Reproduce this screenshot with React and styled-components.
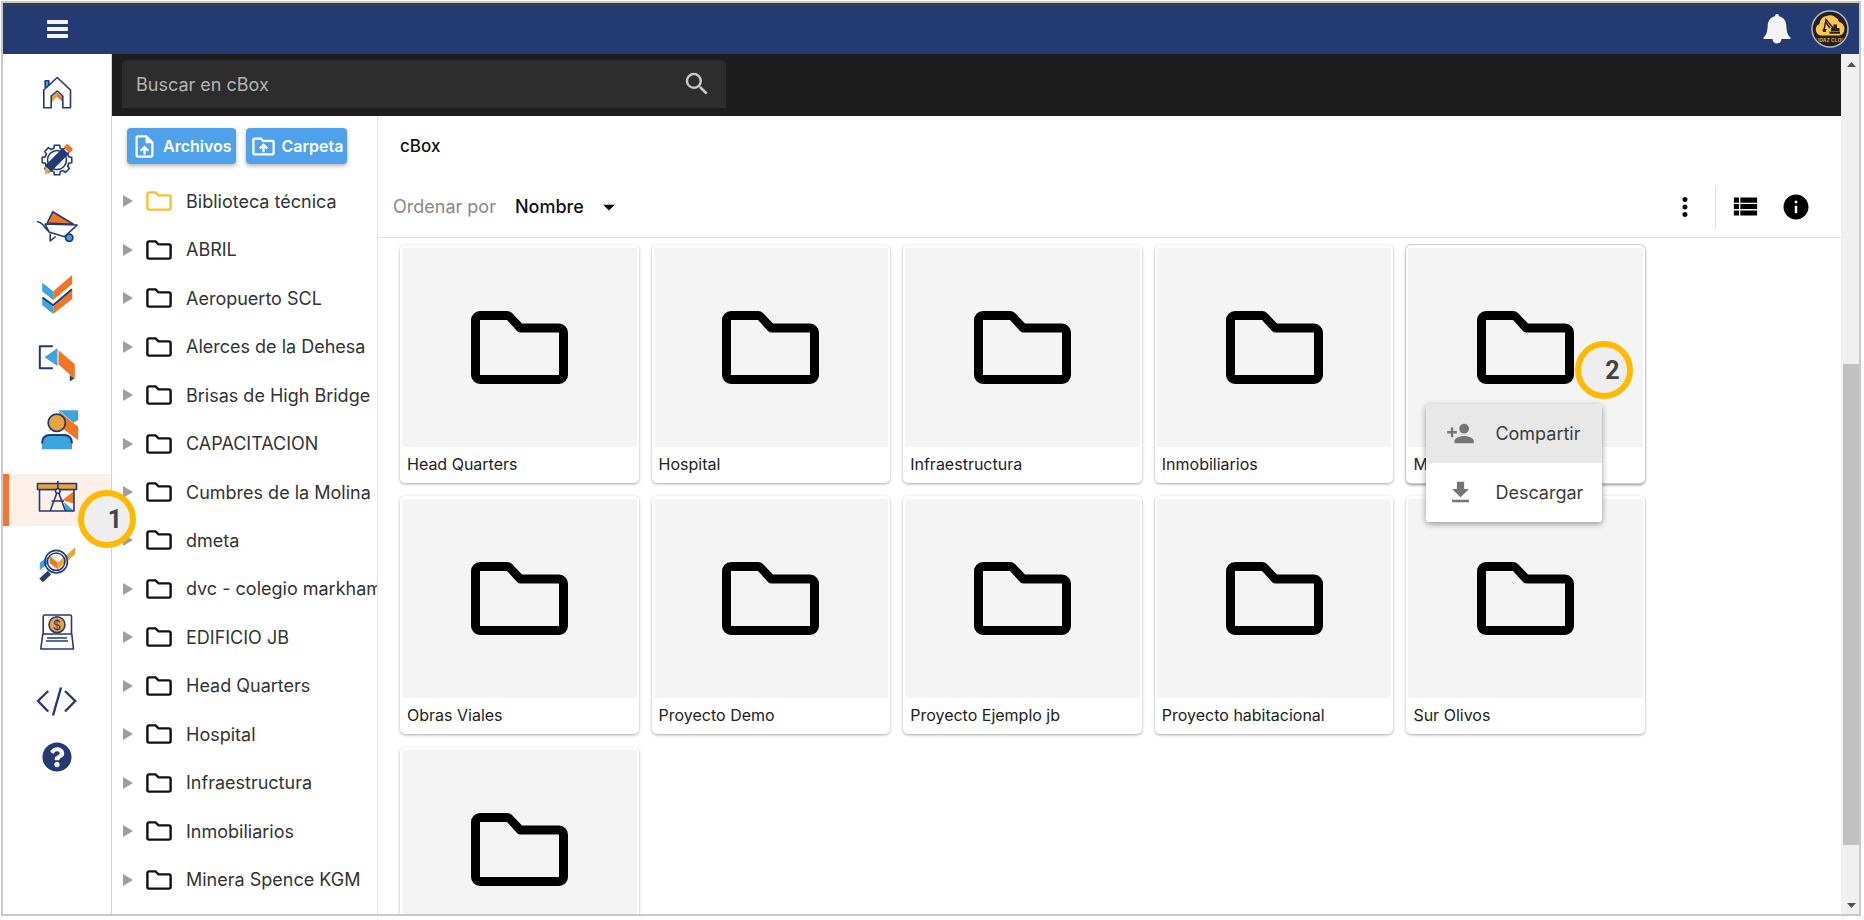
import React from 'react'
import styled, { createGlobalStyle, css } from 'styled-components'
import {
  MdSearch,
  MdArrowDropDown,
  MdMoreVert,
  MdViewList,
  MdInfo,
  MdPersonAdd,
  MdFileDownload,
  MdOutlineUploadFile,
  MdOutlineDriveFolderUpload,
} from 'react-icons/md'
import { FaQuestionCircle } from 'react-icons/fa'

const NAVY = '#243a73'
const ORANGE = '#f07626'
const SKY = '#3ba5de'
const AMBER = '#e9a43c'

const GlobalStyle = createGlobalStyle`
* {
  box-sizing: border-box;
}
body {
  margin: 0;
  background: #fff;
  font-family: Inter, "Open Sans", sans-serif;
  color: #2b2b2b;
}
button, input, select {
  font-family: inherit;
}
`

const Frame = styled.div`
height: calc(100vh - 5px);
margin: 1px 3px 4px 1px;
border: 2px solid #c9c9c9;
display: flex;
flex-direction: column;
overflow: hidden;
`

const Header = styled.header`
flex: none;
height: 51px;
padding: 0 10px 2px 44px;
border-top: 3px solid #3f3f42;
background: ${NAVY};
display: flex;
align-items: center;
justify-content: space-between;
`

const HeaderRight = styled.div`
display: flex;
align-items: center;
gap: 20px;
`

const PlainButton = styled.button`
padding: 0;
border: none;
background: none;
color: inherit;
display: flex;
align-items: center;
justify-content: center;
cursor: pointer;
`

const Body = styled.div`
flex: 1;
min-height: 0;
display: flex;
`

const Sidebar = styled.nav`
flex: none;
width: 109px;
padding-top: 12px;
border-right: 1px solid #d4d4d4;
display: flex;
flex-direction: column;
gap: 16px;
`

const NavItem = styled.div`
position: relative;
`

const NavLink = styled.a`
height: ${(props) => (props.$small ? '42px' : '52px')};
color: ${NAVY};
display: flex;
align-items: center;
justify-content: center;
${(props) =>
  props.$active &&
  css`
    background: #fef0e9;
    box-shadow: inset 6px 0 0 #f9752b;
  `}
`

const Badge = styled.span`
position: absolute;
z-index: 3;
left: ${(props) => props.$left};
top: ${(props) => props.$top};
width: 58px;
height: 58px;
padding-left: 16px;
border: 6px solid #ffb900;
border-radius: 50%;
background: #eee;
color: #444;
font: 700 25px/48px Roboto, sans-serif;
text-align: center;
`

const Content = styled.div`
flex: 1;
min-width: 0;
display: flex;
flex-direction: column;
`

const SearchBar = styled.div`
flex: none;
height: 62px;
padding: 6px 10px 8px;
background: #1d1d1d;
`

const SearchBox = styled.form`
width: 36%;
min-width: 300px;
max-width: 604px;
height: 48px;
padding: 0 14px;
border-radius: 5px 5px 0 0;
background: #2d2d2d;
color: #c8c8c8;
display: flex;
align-items: center;
`

const SearchInput = styled.input`
flex: 1;
min-width: 0;
padding: 0;
border: none;
outline: none;
background: none;
color: #fff;
font-size: 18px;

&::placeholder {
  color: #b4b4b4;
  opacity: 1;
}
`

const Panels = styled.div`
flex: 1;
min-height: 0;
display: flex;
`

const TreePanel = styled.aside`
flex: none;
width: 266px;
padding: 12px 0 10px;
border-right: 1px solid #e0e0e0;
display: flex;
flex-direction: column;
overflow: hidden;
`

const UploadButtons = styled.div`
padding-left: 15px;
margin-bottom: 13px;
display: flex;
gap: 10px;
`

const UploadButton = styled.button`
height: 36px;
padding: 0 4px;
border: none;
border-radius: 4px;
background: #4fa1eb;
color: #fff;
font-size: 16px;
font-weight: 600;
display: flex;
align-items: center;
gap: 5px;
box-shadow: 0 2px 4px rgba(0, 0, 0, 0.3);
cursor: pointer;
`

const Tree = styled.ul`
flex: 1;
min-height: 0;
margin: 0;
padding: 0;
list-style: none;
display: grid;
grid-auto-rows: 1fr;
`

const TreeRow = styled.li`
padding-left: 11px;
display: flex;
align-items: center;
`

const Toggle = styled(PlainButton)`
width: 10px;
height: 12px;
margin-right: 13px;
`

const TreeLink = styled.a`
color: #333;
font-size: 18px;
text-decoration: none;
white-space: nowrap;
display: flex;
align-items: center;
gap: 14px;
`

const Browser = styled.main`
flex: 1;
min-width: 0;
display: flex;
flex-direction: column;
`

const Title = styled.h1`
flex: none;
margin: 0;
padding: 0 22px;
color: #111;
font-size: 17px;
font-weight: 500;
line-height: 60px;
`

const Toolbar = styled.div`
flex: none;
height: 62px;
padding: 0 30px 0 15px;
border-bottom: 1px solid #e2e2e2;
display: flex;
align-items: center;
`

const SortLabel = styled.label`
margin-right: 19px;
color: #888;
font-size: 18px;
`

const SortField = styled.div`
display: grid;
align-items: center;

svg {
  grid-area: 1 / 1;
  justify-self: end;
  color: #000;
  pointer-events: none;
}
`

const SortSelect = styled.select`
grid-area: 1 / 1;
appearance: none;
width: 108px;
padding: 0;
border: none;
background: none;
color: #111;
font-size: 18px;
font-weight: 500;
`

const Tools = styled.div`
height: 42px;
margin-left: auto;
color: #000;
display: flex;
align-items: center;
`

const ToolGroup = styled.div`
height: 100%;
margin-left: 15px;
padding-left: 14px;
border-left: 1px solid #dedede;
display: flex;
align-items: center;
gap: 20px;
`

const CardGrid = styled.ul`
flex: 1;
min-height: 0;
margin: 0;
padding: 7px 22px 0;
list-style: none;
display: grid;
grid-template-columns: repeat(auto-fill, minmax(230px, 1fr));
grid-auto-rows: 238px;
gap: 13px;
max-width: 1289px;
overflow: hidden;
`

const Card = styled.li`
position: relative;
padding: 3px 2px 0;
border-radius: 5px;
background: #fff;
display: flex;
flex-direction: column;
box-shadow: ${(props) =>
    props.$selected
      ? '0 0 0 1px #ccc, 0 2px 3px rgba(0, 0, 0, 0.45)'
      : '0 1px 3px rgba(0, 0, 0, 0.34)'};
`

const Thumb = styled.div`
flex: 1;
background: #f4f4f4;
display: flex;
align-items: center;
justify-content: center;
`

const CardName = styled.a`
flex: none;
height: 36px;
padding: 0 5px;
color: #222;
font-size: 16px;
line-height: 34px;
text-decoration: none;
white-space: nowrap;
`

const Menu = styled.div`
position: absolute;
z-index: 2;
left: 20px;
top: 159px;
width: 176px;
border-radius: 4px;
background: #fff;
box-shadow: 0 2px 6px rgba(0, 0, 0, 0.4);
overflow: hidden;
`

const MenuItem = styled.button`
width: 100%;
height: 59px;
padding: 0 0 0 20px;
border: none;
background: ${(props) => (props.$hover ? '#e8e8e8' : '#fff')};
color: #3c3c3c;
font-size: 18px;
display: flex;
align-items: center;
gap: 20px;
cursor: pointer;

svg {
  color: #757575;
}
`

const Scrollbar = styled.div`
flex: none;
width: 18px;
padding: 8px 0 6px 2px;
background: #f0f0f0;
display: flex;
flex-direction: column;
align-items: center;
justify-content: space-between;
`

const ScrollTrack = styled.div`
flex: 1;
width: 100%;
margin: 4px 0;
display: flex;
flex-direction: column;

&::before {
  content: '';
  flex: 294;
}
&::after {
  content: '';
  flex: 54;
}
`

const ScrollThumb = styled.div`
flex: 482;
background: #c1c1c1;
`

const folderPath =
  'M9 0H36Q39 0 41 2L51 12.5H88A9 9 0 0 1 97 21.5V64A9 9 0 0 1 88 73H9A9 9 0 0 1 0 64V9A9 9 0 0 1 9 0ZM9 9V64H88V21.5H50Q47.500 21.500 46 20L36 9Z'

const BigFolder = () => (
  <svg width="97" height="73" viewBox="0 0 97 73" aria-hidden="true">
    <path d={folderPath} fillRule="evenodd" />
  </svg>
)

const SmallFolder = ({ color = '#111' }) => (
  <svg width="26" height="20" viewBox="0 0 26 20" fill="none" stroke={color} strokeWidth="2.400" aria-hidden="true">
    <path d="M3 1.400H9.500L12.500 4.400H23a1.600 1.600 0 0 1 1.600 1.600V17a1.600 1.600 0 0 1-1.600 1.600H3A1.600 1.600 0 0 1 1.400 17V3A1.600 1.600 0 0 1 3 1.400Z" />
  </svg>
)

const Glyph = ({ height = 52, children }) => (
  <svg
    width="52"
    height={height}
    viewBox={`0 0 52 ${height}`}
    fill="none"
    stroke={NAVY}
    strokeWidth="1.600"
    strokeLinejoin="round"
    aria-hidden="true"
  >
    {children}
  </svg>
)

const gearPoints = () => {
  const points = []
  for (let i = 0; i < 8; i++) {
    const mid = (i * Math.PI) / 4
    const steps = [[-0.26, 12.2], [-0.18, 15], [0.18, 15], [0.26, 12.2]]
    steps.forEach(([offset, r]) => {
      points.push(`${26 + r * Math.sin(mid + offset)},${26 - r * Math.cos(mid + offset)}`)
    })
  }
  return points.join(' ')
}

const HomeGlyph = () => (
  <Glyph>
    <path d="M14.200 22V14.700h3.600v5" fill={SKY} />
    <path d="M26 26.500 31.500 31v5L26 30.500 20.500 36v-5Z" fill={ORANGE} stroke="none" />
    <path d="M26 26.500V30.500L20.500 36v-5Z" fill={AMBER} stroke="none" />
    <path d="M26.200 11.500 39.500 24v17.700h-7.700V30l-5.600-5-6 5v11.700h-7.400V24Z" />
  </Glyph>
)

const GearGlyph = () => (
  <Glyph>
    <polygon points={gearPoints()} />
    <circle cx="26" cy="26" r="9.500" />
    <g transform="rotate(-45 26 26)" stroke="none">
      <rect x="13.500" y="21.500" width="25" height="8.500" fill={NAVY} />
      <path d="M7.500 27.500 13 22v8Z" fill={AMBER} />
      <rect x="39.500" y="21.500" width="5.500" height="8.500" rx="1.500" fill={ORANGE} />
    </g>
  </Glyph>
)

const BarrowGlyph = () => (
  <Glyph>
    <path d="M21.800 9.700 42.500 22.300 16.200 21Z" fill={ORANGE} />
    <path d="M6.200 19.500q4 1 6 3.500 2.500 4 6 6.800M14.200 22l32 1-12.700 11.700L18 30Z" />
    <path d="M19.200 31.500v7.500l5.500-4.500" />
    <circle cx="38.200" cy="35.700" r="3.600" fill={SKY} strokeWidth="1.800" />
  </Glyph>
)

const ChecksGlyph = () => (
  <Glyph>
    <g stroke="none">
      <path d="M11.200 12.700l11 8.600V30l-11-8.700ZM11.200 27l11 9.700V44l-11-9Z" fill={SKY} />
      <path d="M41.200 5v9l-19 16v-8.700ZM41.200 20v9l-19 15v-7.300Z" fill={ORANGE} />
    </g>
    <path d="M11.500 26.300l10.700 7.800 18.800-16" stroke="#fff" />
    <path d="M11.500 27.500l10.700 7.800 18.800-16" strokeWidth="2" />
  </Glyph>
)

const TransferGlyph = () => (
  <Glyph>
    <path d="M21.800 8.300h-13v22h13" strokeWidth="2" />
    <path d="M13.500 19.300 26.500 10v18Z" fill={SKY} stroke="none" />
    <path d="M27.500 12.300l16.300 14V41l-16.300-14.500Z" fill={ORANGE} stroke="none" />
    <path d="M38.800 37l4.400 3.500-4.400 3Z" fill={NAVY} stroke="none" />
  </Glyph>
)

const PersonGlyph = () => (
  <Glyph>
    <path d="M27.500 4.300h19.700V14l-4.700 2.700Z" fill={SKY} stroke="none" />
    <path d="M27.500 5l19.700 15.700v13.600L31 22Z" fill={ORANGE} stroke="none" />
    <path d="M11 43.300V37q0-8 8-8h14q8 0 8 8v6.300Z" fill={SKY} stroke="none" />
    <path d="M11 37.500Q11 29 19 29h14q8 0 8 8.500" strokeWidth="2" />
    <circle cx="25.800" cy="16.700" r="8.600" fill={AMBER} strokeWidth="1.800" />
  </Glyph>
)

const DraftGlyph = () => (
  <Glyph>
    <path d="M43 17v12.500L31.500 26Z" fill={ORANGE} stroke="none" />
    <path d="M33 28l10 9h-8Z" fill={SKY} stroke="none" />
    <rect x="8.500" y="15.500" width="34.500" height="21.500" />
    <rect x="6.500" y="9.500" width="39" height="6" fill={AMBER} />
    <path d="M26.800 7v8M26 18.500 19.200 37M27.600 18.500 34.500 37M20.500 27H33" />
    <circle cx="26.800" cy="17" r="2.300" fill="#fff" />
  </Glyph>
)

const AnalysisGlyph = () => (
  <Glyph>
    <g stroke="none">
      <path d="M8.800 20.700l8-6v7l-8 6.300Z" fill={SKY} />
      <path d="M18.500 13.500l8.300 7.200v6.600L18.500 21Z" fill={ORANGE} />
      <path d="M26.800 20.700 44.200 5.300V12L26.800 27.300Z" fill={AMBER} />
    </g>
    <circle cx="25.200" cy="19.700" r="11.300" />
    <circle cx="25.200" cy="19.700" r="8.700" />
    <path d="M18.500 30.700 10 38.300" strokeWidth="5" />
  </Glyph>
)

const FinanceGlyph = () => (
  <Glyph>
    <path d="M12.200 24V6.500q0-1.500 1.500-1.500h25.300q1.500 0 1.500 1.500V24M11.800 24h29l1.700 15H9.800Z" />
    <path d="M16 28h20M15 31h22" />
    <circle cx="26" cy="14.700" r="8" fill={AMBER} />
    <text x="26" y="19.500" textAnchor="middle" fontSize="13" fill={NAVY} stroke="none">$</text>
  </Glyph>
)

const CodeGlyph = () => (
  <Glyph height={42}>
    <path d="M17.200 13 7 23l10.200 10.500M34 13l10.200 10L34 33.500M30 9.500 22 37.500" strokeWidth="2.400" strokeLinejoin="miter" />
  </Glyph>
)

const Bell = () => (
  <svg width="28" height="30" viewBox="0 0 28 30" fill="#f4f4f4" aria-hidden="true">
    <path d="M14 0q2 0 2 2.200c4.500 1 7 4.400 7.300 9 .3 6 .9 9.300 4.200 12.300q.6 1.500-1 1.500H1.500q-1.600 0-1-1.500c3.300-3 3.900-6.300 4.200-12.300.3-4.600 2.800-8 7.300-9Q12 0 14 0Z" />
    <path d="M9.500 25h9a4.500 4.500 0 0 1-9 0Z" />
  </svg>
)

const Avatar = () => (
  <svg width="38" height="38" viewBox="0 0 38 38" aria-hidden="true">
    <clipPath id="avatar-disc">
      <circle cx="19" cy="19" r="17" />
    </clipPath>
    <circle cx="19" cy="19" r="18" fill="#231f20" stroke="#b9b9b9" strokeWidth="1.500" />
    <path d="M10 25.500a6 6 0 0 1-1.500-11.500A8 8 0 0 1 15.500 6a9.500 9.500 0 0 1 12.500 6A7 7 0 0 1 28.500 25.500Z" fill="#fdc651" />
    <g fill="none" stroke="#231f20" strokeWidth="1.400">
      <path d="M13 20l2-10.500 8 9.500" />
      <path d="M14.500 12l4.500 6" />
    </g>
    <path d="M11.500 19l4 0-1 3h-2.500ZM20 18h2.500v-3.500h3.500V18h2.500v3h-8.500ZM18.500 21.500h10.500v2.300h-10.500Z" fill="#231f20" />
    <text x="19" y="31.500" textAnchor="middle" fontSize="5" fontWeight="700" fill="#d9a53f" clipPath="url(#avatar-disc)">OLIDAZ CLOUD</text>
  </svg>
)

const navItems = [
  { name: 'Inicio', icon: <HomeGlyph /> },
  { name: 'Configuración', icon: <GearGlyph /> },
  { name: 'Obra', icon: <BarrowGlyph /> },
  { name: 'Calidad', icon: <ChecksGlyph /> },
  { name: 'Transferencias', icon: <TransferGlyph /> },
  { name: 'Usuarios', icon: <PersonGlyph /> },
  { name: 'Planos', icon: <DraftGlyph />, active: true },
  { name: 'Análisis', icon: <AnalysisGlyph /> },
  { name: 'Finanzas', icon: <FinanceGlyph /> },
  { name: 'Desarrollo', icon: <CodeGlyph />, small: true },
  { name: 'Ayuda', icon: <FaQuestionCircle size={30} />, small: true },
]

const treeItems = [
  'Biblioteca técnica',
  'ABRIL',
  'Aeropuerto SCL',
  'Alerces de la Dehesa',
  'Brisas de High Bridge',
  'CAPACITACION',
  'Cumbres de la Molina',
  'dmeta',
  'dvc - colegio markham',
  'EDIFICIO JB',
  'Head Quarters',
  'Hospital',
  'Infraestructura',
  'Inmobiliarios',
  'Minera Spence KGM',
]

const cards = [
  'Head Quarters',
  'Hospital',
  'Infraestructura',
  'Inmobiliarios',
  'Minera Spence KGM',
  'Obras Viales',
  'Proyecto Demo',
  'Proyecto Ejemplo jb',
  'Proyecto habitacional',
  'Sur Olivos',
  '',
]

const App = () => {
  return (
    <>
    <GlobalStyle/>
    <Frame>
        <Header>
            <PlainButton aria-label="Menú">
                <svg width="21" height="18" viewBox="0 0 21 18" fill="#f4f4f4">
                    <rect width="21" height="4" rx="1"/>
                    <rect y="7" width="21" height="4" rx="1"/>
                    <rect y="14" width="21" height="4" rx="1"/>
                </svg>
            </PlainButton>
            <HeaderRight>
                <PlainButton aria-label="Notificaciones"><Bell/></PlainButton>
                <PlainButton aria-label="Cuenta"><Avatar/></PlainButton>
            </HeaderRight>
        </Header>
        <Body>
            <Sidebar>
                {navItems.map((item) => (
                  <NavItem key={item.name}>
                      <NavLink href="#" aria-label={item.name} $active={item.active} $small={item.small}>
                          {item.icon}
                      </NavLink>
                      {item.active && <Badge $left="75px" $top="16px">1</Badge>}
                  </NavItem>
                ))}
            </Sidebar>
            <Content>
                <SearchBar>
                    <SearchBox>
                        <SearchInput type="text" aria-label="Buscar en cBox" placeholder="Buscar en cBox"/>
                        <PlainButton type="button" aria-label="Buscar"><MdSearch size={30}/></PlainButton>
                    </SearchBox>
                </SearchBar>
                <Panels>
                    <TreePanel>
                        <UploadButtons>
                            <UploadButton><MdOutlineUploadFile size={27}/>Archivos</UploadButton>
                            <UploadButton><MdOutlineDriveFolderUpload size={27}/>Carpeta</UploadButton>
                        </UploadButtons>
                        <Tree>
                            {treeItems.map((name, index) => (
                              <TreeRow key={name}>
                                  <Toggle aria-label={`Expandir ${name}`}>
                                      <svg width="10" height="12" viewBox="0 0 10 12"><path d="M0 0 10 6 0 12Z" fill="#9e9e9e"/></svg>
                                  </Toggle>
                                  <TreeLink href="#">
                                      <SmallFolder color={index === 0 ? '#fcc02e' : '#111'}/>
                                      {name}
                                  </TreeLink>
                              </TreeRow>
                            ))}
                        </Tree>
                    </TreePanel>
                    <Browser>
                        <Title>cBox</Title>
                        <Toolbar>
                            <SortLabel htmlFor="sort">Ordenar por</SortLabel>
                            <SortField>
                                <SortSelect id="sort" defaultValue="Nombre">
                                    <option>Nombre</option>
                                </SortSelect>
                                <MdArrowDropDown size={28}/>
                            </SortField>
                            <Tools>
                                <PlainButton aria-label="Más opciones"><MdMoreVert size={30}/></PlainButton>
                                <ToolGroup>
                                    <PlainButton aria-label="Ver como lista"><MdViewList size={31}/></PlainButton>
                                    <PlainButton aria-label="Información"><MdInfo size={30}/></PlainButton>
                                </ToolGroup>
                            </Tools>
                        </Toolbar>
                        <CardGrid>
                            {cards.map((name, index) => (
                              <Card key={name} $selected={index === 4}>
                                  <Thumb><BigFolder/></Thumb>
                                  <CardName href="#">{name}</CardName>
                                  {index === 4 && (
                                    <>
                                    <Menu role="menu">
                                        <MenuItem role="menuitem" $hover><MdPersonAdd size={29}/>Compartir</MenuItem>
                                        <MenuItem role="menuitem"><MdFileDownload size={29}/>Descargar</MenuItem>
                                    </Menu>
                                    <Badge $left="169px" $top="96px">2</Badge>
                                    </>
                                  )}
                              </Card>
                            ))}
                        </CardGrid>
                    </Browser>
                </Panels>
            </Content>
            <Scrollbar>
                <svg width="9" height="5" viewBox="0 0 9 5"><path d="M0 5 4.500 0 9 5Z" fill="#505050"/></svg>
                <ScrollTrack><ScrollThumb/></ScrollTrack>
                <svg width="9" height="5" viewBox="0 0 9 5"><path d="M0 0 4.500 5 9 0Z" fill="#505050"/></svg>
            </Scrollbar>
        </Body>
    </Frame>
    </>
  )
}

export default App
